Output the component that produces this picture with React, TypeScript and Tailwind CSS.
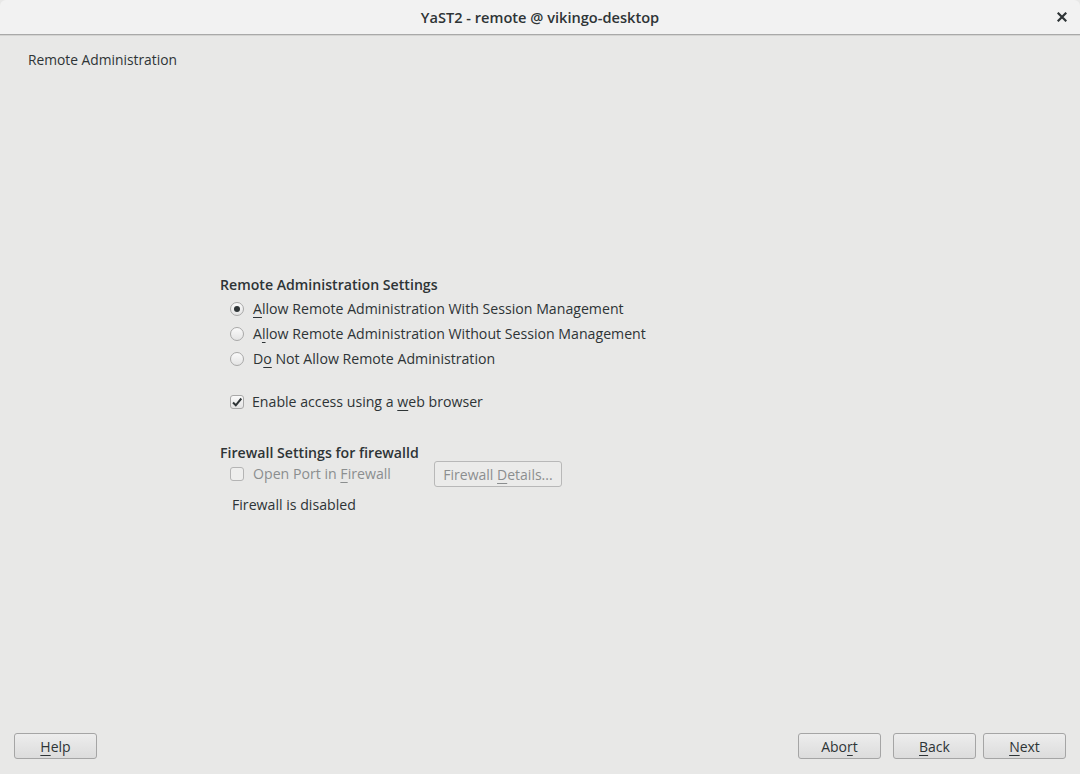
import React from "react";

const font = { fontFamily: '"Open Sans", "DejaVu Sans", sans-serif' };

function U({ children }: { children: React.ReactNode }) {
  return <span className="underline underline-offset-[3px] decoration-1">{children}</span>;
}

function Radio({ checked }: { checked?: boolean }) {
  return (
    <span className="flex h-[14px] w-[14px] shrink-0 items-center justify-center rounded-full border border-[#a8a8a8] bg-gradient-to-b from-[#fafafa] to-[#e4e4e4]">
      {checked && <span className="h-[6px] w-[6px] rounded-full bg-[#2e3436]" />}
    </span>
  );
}

function Btn({ children, w = "w-[83px]", disabled }: { children: React.ReactNode; w?: string; disabled?: boolean }) {
  return (
    <div
      className={`flex h-[26px] ${w} items-center justify-center rounded-[3px] border ${
        disabled
          ? "border-[#b8b8b8] bg-[#ebebea] text-[#8b8e8f]"
          : "border-[#a5a5a5] bg-gradient-to-b from-[#ededed] to-[#dcdcdc] text-[#2e3436]"
      } text-[14px]`}
    >
      <span>{children}</span>
    </div>
  );
}

export default function App() {
  return (
    <div className="flex h-[774px] w-[1080px] flex-col bg-[#e8e8e7] text-[#2e3436]" style={font}>
      <div className="relative flex h-[35px] shrink-0 items-center justify-center border-b border-[#a9a9a9] bg-[#f2f2f2] pt-[2px] rounded-t-[6px]">
        <span className="text-[14.6px] font-semibold text-[#2e3436]">YaST2 - remote @ vikingo-desktop</span>
        <svg className="absolute right-[13px] top-[12px]" width="10" height="10" viewBox="0 0 10 10">
          <path d="M1.5 1.5 L8.5 8.5 M8.5 1.5 L1.5 8.5" stroke="#2e3436" strokeWidth="2.2" strokeLinecap="square" />
        </svg>
      </div>
      <div className="h-px bg-[#d4d4d2]" />
      <div className="px-[28px] pt-[14px] text-[13.8px] leading-[20px]">Remote Administration</div>

      <div className="flex flex-1 flex-col pl-[220px] pt-[205px] text-[14.15px]">
        <div className="font-semibold leading-[20px]">Remote Administration Settings</div>
        <div className="mt-[1px] flex flex-col pl-[10px]">
          <div className="flex h-[25px] items-center gap-[9px]">
            <Radio checked />
            <span><U>A</U>llow Remote Administration With Session Management</span>
          </div>
          <div className="flex h-[25px] items-center gap-[9px]">
            <Radio />
            <span>A<U>l</U>low Remote Administration Without Session Management</span>
          </div>
          <div className="flex h-[25px] items-center gap-[9px]">
            <Radio />
            <span>D<U>o</U> Not Allow Remote Administration</span>
          </div>
          <div className="mt-[18px] flex h-[25px] items-center gap-[8px]">
            <span className="flex h-[14px] w-[14px] items-center justify-center rounded-[3px] border border-[#a8a8a8] bg-gradient-to-b from-[#fafafa] to-[#e4e4e4]">
              <svg width="12" height="12" viewBox="0 0 12 12">
                <path d="M2 6.5 L4.8 9.3 L10.3 2.5" fill="none" stroke="#2e3436" strokeWidth="2" />
              </svg>
            </span>
            <span>Enable access using a <U>w</U>eb browser</span>
          </div>
        </div>

        <div className="mt-[29px] font-semibold leading-[20px]">Firewall Settings for firewalld</div>
        <div className="-mt-[2px] flex items-center pl-[10px]">
          <div className="flex h-[26px] w-[204px] items-center gap-[9px]">
            <span className="h-[14px] w-[14px] shrink-0 rounded-[3px] border border-[#b4b4b4] bg-[#eeeeed]" />
            <span className="text-[#8b8e8f]">Open Port in <U>F</U>irewall</span>
          </div>
          <Btn w="w-[128px]" disabled>
            Firewall <U>D</U>etails...
          </Btn>
        </div>
        <div className="mt-[8px] pl-[12px] leading-[20px]">Firewall is disabled</div>
      </div>

      <div className="flex h-[41px] shrink-0 items-start justify-between pl-[14px] pr-[14px]">
        <Btn><U>H</U>elp</Btn>
        <div className="flex gap-[12px]">
          <Btn>Abo<U>r</U>t</Btn>
          <div className="flex gap-[7px]">
            <Btn><U>B</U>ack</Btn>
            <Btn><U>N</U>ext</Btn>
          </div>
        </div>
      </div>
    </div>
  );
}
